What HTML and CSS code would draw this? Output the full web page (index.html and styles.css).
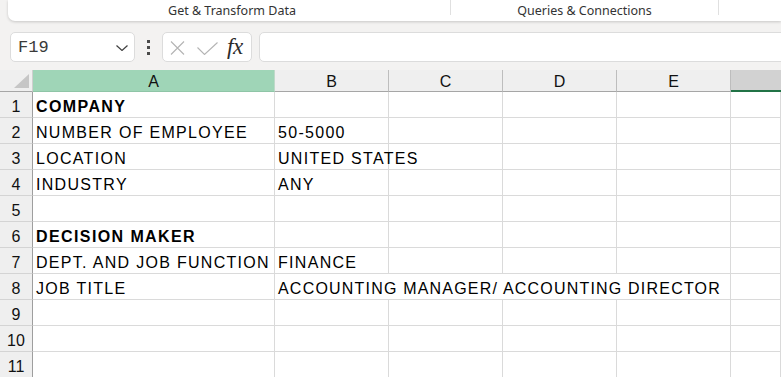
FILE: index.html
```html
<!DOCTYPE html>
<html lang="en">
<head>
<meta charset="utf-8">
<title>Sheet</title>
<link rel="stylesheet" href="styles.css">
</head>
<body>
<div class="ribbon">
  <div class="group g1">Get &amp; Transform Data</div>
  <div class="group g2">Queries &amp; Connections</div>
  <div class="group g3"></div>
</div>

<div class="fbar">
  <div class="namebox">
    <span class="ref">F19</span>
    <svg class="chev" width="12" height="6" viewBox="0 0 12 6"><path d="M0.5 0.5 L6 5.5 L11.5 0.5" fill="none" stroke="#404040" stroke-width="1.2"/></svg>
  </div>
  <div class="dots"><span></span><span></span><span></span></div>
  <div class="fxbox">
    <svg class="ico-x" width="15" height="14" viewBox="0 0 15 14"><path d="M1 0.5 L14 13.5 M14 0.5 L1 13.5" fill="none" stroke="#b4b4b4" stroke-width="1.1"/></svg>
    <svg class="ico-ok" width="21" height="13" viewBox="0 0 21 13"><path d="M0.5 5.5 L7.5 12.5 L20.5 0.5" fill="none" stroke="#b4b4b4" stroke-width="1.1"/></svg>
    <span class="fx">fx</span>
  </div>
  <div class="finput"></div>
</div>

<div class="sheet">
  <div class="corner"><svg width="15" height="14" viewBox="0 0 15 14"><polygon points="15,0 15,14 0,14" fill="#c6c6c6"/></svg></div>
  <div class="ch sel-a">A</div>
  <div class="ch">B</div>
  <div class="ch">C</div>
  <div class="ch">D</div>
  <div class="ch">E</div>
  <div class="ch sel-f"></div>

  <div class="rh">1</div><div class="c b">COMPANY</div><div class="c"></div><div class="c"></div><div class="c"></div><div class="c"></div><div class="c"></div>
  <div class="rh">2</div><div class="c">NUMBER OF EMPLOYEE</div><div class="c">50-5000</div><div class="c"></div><div class="c"></div><div class="c"></div><div class="c"></div>
  <div class="rh">3</div><div class="c">LOCATION</div><div class="c">UNITED STATES</div><div class="c"></div><div class="c"></div><div class="c"></div><div class="c"></div>
  <div class="rh">4</div><div class="c">INDUSTRY</div><div class="c">ANY</div><div class="c"></div><div class="c"></div><div class="c"></div><div class="c"></div>
  <div class="rh">5</div><div class="c"></div><div class="c"></div><div class="c"></div><div class="c"></div><div class="c"></div><div class="c"></div>
  <div class="rh">6</div><div class="c b">DECISION MAKER</div><div class="c"></div><div class="c"></div><div class="c"></div><div class="c"></div><div class="c"></div>
  <div class="rh">7</div><div class="c">DEPT. AND JOB FUNCTION</div><div class="c">FINANCE</div><div class="c"></div><div class="c"></div><div class="c"></div><div class="c"></div>
  <div class="rh">8</div><div class="c">JOB TITLE</div><div class="c span4">ACCOUNTING MANAGER/ ACCOUNTING DIRECTOR</div><div class="c"></div>
  <div class="rh">9</div><div class="c"></div><div class="c"></div><div class="c"></div><div class="c"></div><div class="c"></div><div class="c"></div>
  <div class="rh">10</div><div class="c"></div><div class="c"></div><div class="c"></div><div class="c"></div><div class="c"></div><div class="c"></div>
  <div class="rh">11</div><div class="c"></div><div class="c"></div><div class="c"></div><div class="c"></div><div class="c"></div><div class="c"></div>
</div>
</body>
</html>
```

FILE: styles.css
```css
* { box-sizing: border-box; }
html, body { margin: 0; padding: 0; }
body {
  background: #f3f2f1;
  width: 781px;
  height: 377px;
  overflow: hidden;
  font-family: "Liberation Sans", Arial, sans-serif;
}

/* ribbon */
.ribbon {
  margin-left: 8px;
  height: 21px;
  background: #ffffff;
  border-bottom-left-radius: 7px;
  box-shadow: 0 1px 3px rgba(0,0,0,0.18);
  display: flex;
  align-items: flex-start;
  font-family: "Noto Sans", "Open Sans", sans-serif;
  font-size: 12.5px;
  color: #333333;
}
.group {
  height: 15px;
  line-height: 21px;
  text-align: center;
  white-space: nowrap;
}
.g1 { width: 442px; padding-left: 6px; }
.g2 { width: 268px; border-left: 1px solid #e0e0e0; }
.g3 { flex: 1; border-left: 1px solid #e0e0e0; }

/* formula bar */
.fbar {
  margin-top: 11px;
  height: 30px;
  display: flex;
  align-items: stretch;
  margin-bottom: 8px;
}
.namebox {
  margin-left: 10px;
  width: 125px;
  background: #fff;
  border: 1px solid #dcdcdc;
  border-radius: 5px;
  display: flex;
  align-items: center;
  justify-content: space-between;
  padding: 0 6px 0 7px;
}
.ref {
  font-family: "Liberation Mono", "Courier New", monospace;
  font-size: 17px;
  color: #3a3a3a;
  padding-top: 1px;
}
.chev { margin-top: 2px; }
.dots {
  width: 27px;
  display: flex;
  flex-direction: column;
  align-items: center;
  justify-content: center;
  gap: 3px;
}
.dots span {
  width: 3px;
  height: 3px;
  background: #4a4a4a;
}
.fxbox {
  width: 90px;
  background: #fff;
  border: 1px solid #dcdcdc;
  border-radius: 5px;
  display: flex;
  align-items: center;
  padding-left: 7px;
}
.ico-x { margin-top: 1px; }
.ico-ok { margin-left: 12px; margin-top: 2px; }
.fx {
  margin-left: 9px;
  font-family: "Liberation Serif", "Times New Roman", serif;
  font-style: italic;
  font-size: 23px;
  color: #2b2b2b;
  line-height: 20px;
  letter-spacing: -0.5px;
}
.finput {
  margin-left: 7px;
  flex: 1;
  margin-right: -20px;
  background: #fff;
  border: 1px solid #dcdcdc;
  border-radius: 5px;
}

/* sheet */
.sheet {
  display: grid;
  grid-template-columns: 33px 242px 114px 114px 114px 114px 1fr;
  grid-auto-rows: 26px;
  grid-template-rows: 22px;
  background: #fff;
  font-size: 16px;
  color: #000;
}
.corner {
  background: #efefef;
  border-right: 1px solid #cfcfcf;
  border-bottom: 1px solid #a6a6a6;
  display: flex;
  justify-content: flex-end;
  align-items: flex-end;
  padding: 0 3px 3px 0;
}
.ch {
  background: #efefef;
  border-right: 1px solid #bdbdbd;
  border-bottom: 1px solid #a6a6a6;
  display: flex;
  justify-content: center;
  align-items: flex-end;
  line-height: 18px;
  color: #111;
}
.ch.sel-a {
  background: #9fd5b7;
  border-right-color: #bfd9c9;
  border-bottom-color: #8fc5a7;
}
.ch.sel-f {
  background: #d2d2d2;
  border-bottom: 2px solid #217346;
  border-right: none;
}
.rh {
  background: #efefef;
  border-right: 1px solid #9e9e9e;
  border-bottom: 1px solid #d4d4d4;
  display: flex;
  justify-content: center;
  align-items: flex-end;
  line-height: 18px;
  padding-bottom: 1px;
  color: #111;
}
.c {
  border-right: 1px solid #dadada;
  border-bottom: 1px solid #dadada;
  display: flex;
  align-items: flex-end;
  line-height: 18px;
  padding: 0 0 1px 3px;
  white-space: nowrap;
  letter-spacing: 1.3px;
}
.c.b { font-weight: bold; letter-spacing: 1.4px; }
.c.span4 { grid-column: span 4; letter-spacing: 1.2px; }
```
